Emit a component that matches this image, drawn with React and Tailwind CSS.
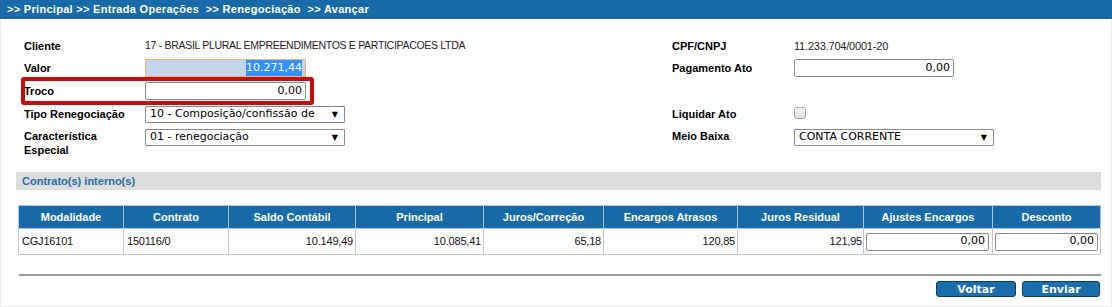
const sans = "font-['Liberation_Sans',Arial,sans-serif]";
const verd = "font-['DejaVu_Sans',Verdana,sans-serif]";

function TextInput({ value, className = "" }) {
  return (
    <div
      className={`h-[18px] border border-[#8a8a8a] rounded-[2px] bg-white flex items-center justify-end pr-[3px] text-[11px] text-black ${verd} ${className}`}
    >
      {value}
    </div>
  );
}

function FakeSelect({ value, className = "" }) {
  return (
    <div
      className={`h-[17px] border border-[#8a8a8a] rounded-[1px] bg-white flex items-center justify-between pl-[4px] pr-[6px] text-[11px] text-black whitespace-nowrap overflow-hidden ${verd} ${className}`}
    >
      <span className="overflow-hidden">{value}</span>
      <span className="text-[8px] leading-none ml-1">▼</span>
    </div>
  );
}

const columns = [
  { title: "Modalidade", w: "w-[105px]" },
  { title: "Contrato", w: "w-[105px]" },
  { title: "Saldo Contábil", w: "w-[127px]" },
  { title: "Principal", w: "w-[128px]" },
  { title: "Juros/Correção", w: "w-[120px]" },
  { title: "Encargos Atrasos", w: "w-[134px]" },
  { title: "Juros Residual", w: "w-[126px]" },
  { title: "Ajustes Encargos", w: "w-[129px]" },
  { title: "Desconto", w: "w-[108px]" },
];

export default function App() {
  return (
    <div className={`relative w-[1112px] h-[307px] bg-white overflow-hidden ${sans}`}>
      {/* breadcrumb bar */}
      <div className="h-[19px] bg-[#186ba8] flex items-center pl-[7px] text-white text-[11px] font-bold whitespace-pre tracking-[0.3px]">
        {">> Principal >> Entrada Operações  >> Renegociação  >> Avançar"}
      </div>

      <div className="h-[288px] border-x border-b border-[#ececec]">
        {/* form */}
        <div className="pt-[16px] pl-[23px] grid grid-cols-[121px_527px_122px_1fr] text-[11px]">
          <div className="h-[22px] flex items-center font-bold text-black">Cliente</div>
          <div className="h-[22px] flex items-center text-[#222] text-[10.5px] tracking-[-0.3px]">
            17 - BRASIL PLURAL EMPREENDIMENTOS E PARTICIPACOES LTDA
          </div>
          <div className="h-[22px] flex items-center font-bold text-black">CPF/CNPJ</div>
          <div className="h-[22px] flex items-center text-[#222] tracking-[-0.2px]">11.233.704/0001-20</div>

          <div className="h-[22px] flex items-center font-bold text-black">Valor</div>
          <div className="h-[22px] flex items-center">
            <div className={`w-[161px] h-[18px] border border-[#e8b878] bg-[#c3d6ea] flex items-center justify-end pr-[3px] text-[11px] ${verd}`}>
              <span className="bg-[#3390ff] text-white">10.271,44</span>
            </div>
          </div>
          <div className="h-[22px] flex items-center font-bold text-black">Pagamento Ato</div>
          <div className="h-[22px] flex items-center">
            <TextInput value="0,00" className="w-[160px]" />
          </div>

          <div className="h-[24px] flex items-center font-bold text-black">Troco</div>
          <div className="h-[24px] flex items-center">
            <TextInput value="0,00" className="w-[161px]" />
          </div>
          <div className="h-[24px]" />
          <div className="h-[24px]" />

          <div className="h-[23px] flex items-center font-bold text-black">Tipo Renegociação</div>
          <div className="h-[23px] flex items-center">
            <FakeSelect value="10 - Composição/confissão de" className="w-[200px]" />
          </div>
          <div className="h-[23px] flex items-center font-bold text-black">Liquidar Ato</div>
          <div className="h-[23px] flex items-center">
            <div className="w-[12px] h-[12px] rounded-[3px] border border-[#a8a8a8] bg-gradient-to-b from-[#f4f4f4] to-[#dcdcdc] -mt-[4px]" />
          </div>

          <div className="pt-[3px] font-bold text-black leading-[14px]">
            Característica
            <br />
            Especial
          </div>
          <div className="pt-[3px]">
            <FakeSelect value="01 - renegociação" className="w-[200px]" />
          </div>
          <div className="pt-[3px] font-bold text-black leading-[14px]">Meio Baixa</div>
          <div className="pt-[3px]">
            <FakeSelect value="CONTA CORRENTE" className="w-[200px]" />
          </div>
        </div>

        {/* section */}
        <div className="mt-[15px] ml-[15px] w-[1085px] h-[18px] bg-[#dddddd] flex items-center pl-[6px] text-[11px] font-bold text-[#236ea8]">
          Contrato(s) interno(s)
        </div>

        <table className="mt-[15px] ml-[17px] w-[1082px] table-fixed border-collapse text-[11px]">
          <colgroup>
            {columns.map((c) => (
              <col key={c.title} className={c.w} />
            ))}
          </colgroup>
          <thead>
            <tr className="h-[23px] bg-[#186ba8]">
              {columns.map((c) => (
                <th
                  key={c.title}
                  className="border border-[#a9c9e2] text-white font-bold text-center"
                >
                  {c.title}
                </th>
              ))}
            </tr>
          </thead>
          <tbody>
            <tr className="h-[26px] text-[#111]">
              <td className="border border-[#c6c6c6] pl-[3px] tracking-[-0.2px]">CGJ16101</td>
              <td className="border border-[#c6c6c6] pl-[3px] tracking-[-0.2px]">150116/0</td>
              <td className="border border-[#c6c6c6] text-right pr-[2px] tracking-[-0.2px]">10.149,49</td>
              <td className="border border-[#c6c6c6] text-right pr-[2px] tracking-[-0.2px]">10.085,41</td>
              <td className="border border-[#c6c6c6] text-right pr-[2px] tracking-[-0.2px]">65,18</td>
              <td className="border border-[#c6c6c6] text-right pr-[2px] tracking-[-0.2px]">120,85</td>
              <td className="border border-[#c6c6c6] text-right pr-[1px] tracking-[-0.2px]">121,95</td>
              <td className="border border-[#c6c6c6] pl-[2px]">
                <TextInput value="0,00" className="w-[123px]" />
              </td>
              <td className="border border-[#c6c6c6] pl-[2px]">
                <TextInput value="0,00" className="w-[103px]" />
              </td>
            </tr>
          </tbody>
        </table>

        <div className="mt-[19px] ml-[18px] w-[1082px] h-[2px] bg-[#9a9a9a]" />

        <div className="mt-[5px] ml-[18px] w-[1082px] flex justify-end gap-[6px] pr-[1px]">
          <button className={`w-[80px] h-[16px] rounded-[3px] border border-[#0d3f66] bg-[#1a6eab] text-white text-[11px] font-bold leading-none ${verd}`}>
            Voltar
          </button>
          <button className={`w-[78px] h-[16px] rounded-[3px] border border-[#0d3f66] bg-[#1a6eab] text-white text-[11px] font-bold leading-none ${verd}`}>
            Enviar
          </button>
        </div>
      </div>

      {/* annotation highlight */}
      <div className="absolute left-[21px] top-[77px] w-[293px] h-[28px] border-[4px] border-[#cc0a0a] rounded-[3px] pointer-events-none" />
    </div>
  );
}
